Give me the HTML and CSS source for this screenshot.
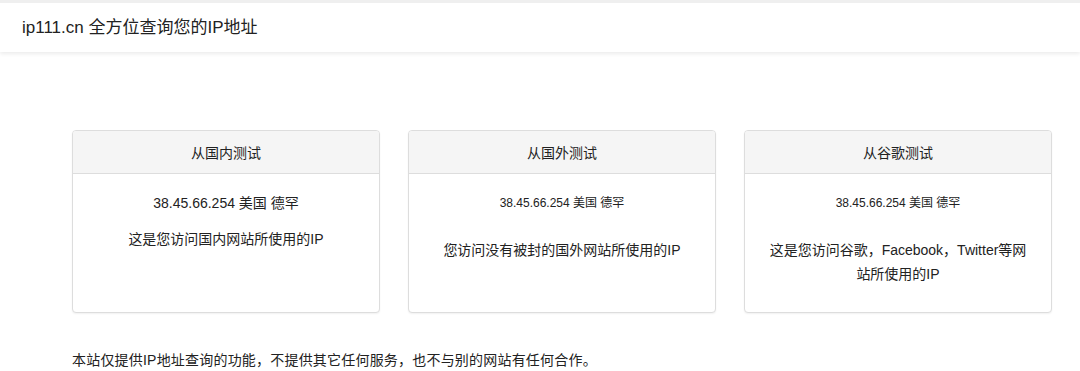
FILE: index.html
```html
<!DOCTYPE html>
<html lang="zh-CN">
<head>
    <meta charset="UTF-8">
    <meta name="viewport" content="width=device-width, initial-scale=1.0">
    <title>ip111.cn 全方位查询您的IP地址</title>
    <link rel="stylesheet" href="styles.css">
</head>
<body>
    <div class="topbar">
        <span class="brand">ip111.cn 全方位查询您的IP地址</span>
    </div>

    <div class="main">
        <div class="panels">
            <div class="panel">
                <div class="panel-heading">从国内测试</div>
                <div class="panel-body">
                    <p class="ip ip-big">38.45.66.254 美国 德罕</p>
                    <p class="desc desc-near">这是您访问国内网站所使用的IP</p>
                </div>
            </div>
            <div class="panel">
                <div class="panel-heading">从国外测试</div>
                <div class="panel-body">
                    <p class="ip">38.45.66.254 美国 德罕</p>
                    <p class="desc">您访问没有被封的国外网站所使用的IP</p>
                </div>
            </div>
            <div class="panel">
                <div class="panel-heading">从谷歌测试</div>
                <div class="panel-body">
                    <p class="ip">38.45.66.254 美国 德罕</p>
                    <p class="desc">这是您访问谷歌，Facebook，Twitter等网站所使用的IP</p>
                </div>
            </div>
        </div>

        <p class="note">本站仅提供IP地址查询的功能，不提供其它任何服务，也不与别的网站有任何合作。</p>
    </div>
</body>
</html>
```

FILE: styles.css
```css
body {
    margin: 0;
    font-family: "Liberation Sans", "Noto Sans CJK SC", sans-serif;
    font-size: 14px;
    color: #222;
    background-color: #fff;
}
.topbar {
    height: 49px;
    border-top: 3px solid #efefef;
    padding-left: 22px;
    display: flex;
    align-items: center;
    box-shadow: 0 2px 4px rgba(0, 0, 0, 0.08);
}
.brand {
    font-size: 17px;
    line-height: 20px;
}
.main {
    padding: 78px 28px 0 72px;
}
.panels {
    display: flex;
    gap: 28px;
}
.panel {
    flex: 1;
    border: 1px solid #ddd;
    border-radius: 4px;
    box-shadow: 0 1px 2px rgba(0, 0, 0, 0.06);
    background-color: #fff;
}
.panel-heading {
    background-color: #f5f5f5;
    border-bottom: 1px solid #ddd;
    border-radius: 3px 3px 0 0;
    padding: 12px 0 10px;
    line-height: 20px;
    text-align: center;
}
.panel-body {
    height: 138px;
    box-sizing: border-box;
    padding: 17px 18px 0;
    text-align: center;
}
.panel-body p {
    margin: 0;
    line-height: 24px;
}
.ip {
    font-size: 12px;
}
.ip-big {
    font-size: 14px;
}
.desc {
    margin-top: 23px !important;
}
.desc-near {
    margin-top: 12px !important;
}
.note {
    margin: 37px 0 0;
    line-height: 20px;
    font-size: 14px;
    letter-spacing: 0.2px;
}
```
